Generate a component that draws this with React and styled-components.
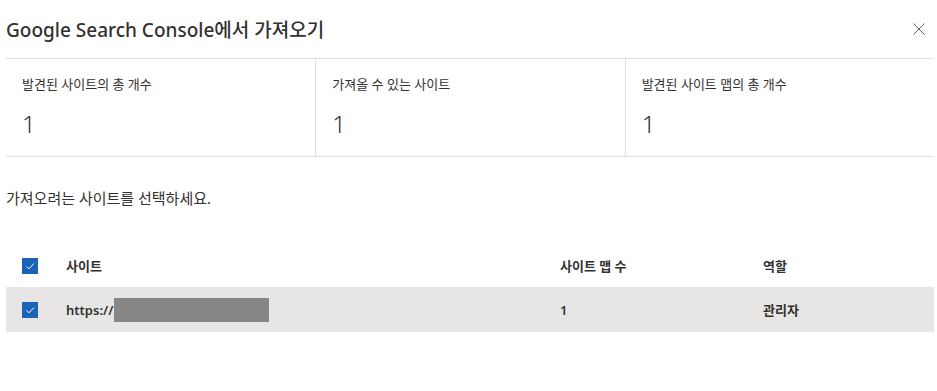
import React from "react";
import styled, { createGlobalStyle } from "styled-components";

const GlobalStyle = createGlobalStyle`
  body {
    margin: 0;
    background: #fff;
    font-family: "Noto Sans", "Noto Sans CJK KR", sans-serif;
    color: #323130;
  }
`;

const Dialog = styled.div`
  width: 928px;
  padding: 0 3px 0 6px;
`;

/* Header */
const Header = styled.div`
  height: 58px;
  display: flex;
  align-items: center;
  justify-content: space-between;
`;

const Title = styled.h1`
  margin: 0;
  font-size: 19px;
  font-weight: 500;
  color: #323130;
`;

const CloseButton = styled.button`
  border: 0;
  background: none;
  padding: 0;
  margin-right: 7px;
  width: 16px;
  height: 16px;
  display: flex;
  align-items: center;
  justify-content: center;
  cursor: pointer;
`;

/* Stats */
const Stats = styled.div`
  display: grid;
  grid-template-columns: repeat(3, 1fr);
  border-top: 1px solid #e1dfdd;
  border-bottom: 1px solid #e1dfdd;
`;

const StatCell = styled.div`
  height: 97px;
  box-sizing: border-box;
  padding: 16px 16px 0;
  border-left: ${(p) => (p.$first ? "none" : "1px solid #e1dfdd")};
`;

const StatLabel = styled.div`
  font-size: 13px;
  line-height: 18px;
  color: #323130;
`;

const StatValue = styled.div`
  margin-top: 15px;
  font-size: 24px;
  font-weight: 300;
  line-height: 32px;
  color: #323130;
`;

const Instruction = styled.p`
  margin: 31px 0 0;
  font-size: 15px;
  line-height: 20px;
  color: #323130;
`;

/* Table */
const Table = styled.div`
  margin-top: 36px;
`;

const Row = styled.div`
  display: grid;
  grid-template-columns: 60px 494px 203px 1fr;
  align-items: center;
  height: ${(p) => (p.$header ? "43px" : "45px")};
  background: ${(p) => (p.$selected ? "#e8e6e4" : "transparent")};
  font-size: 13px;
  font-weight: 600;
  color: #323130;
`;

const CheckCell = styled.div`
  padding-left: 16px;
  display: flex;
  align-items: center;
`;

const Check = styled.span`
  width: 16px;
  height: 16px;
  background: #1a63b8;
  display: flex;
  align-items: center;
  justify-content: center;
`;

const Cell = styled.div`
  display: flex;
  align-items: center;
`;

const Redacted = styled.span`
  display: inline-block;
  width: 155px;
  height: 24px;
  background: #878787;
  margin-left: 1px;
`;

const CheckBox = () => (
  <Check>
    <svg width="12" height="12" viewBox="0 0 12 12">
      <path d="M2.5 6.5 L5 8.8 L9.8 3.6" fill="none" stroke="#fff" strokeWidth="1" />
    </svg>
  </Check>
);

const stats = [
  { label: "발견된 사이트의 총 개수", value: 1 },
  { label: "가져올 수 있는 사이트", value: 1 },
  { label: "발견된 사이트 맵의 총 개수", value: 1 },
];

const App = () => {
  return (
    <Dialog>
      <GlobalStyle />
      <Header>
        <Title>Google Search Console에서 가져오기</Title>
        <CloseButton aria-label="닫기">
          <svg width="12" height="12" viewBox="0 0 12 12">
            <path d="M0.5 0.5 L11.5 11.5 M11.5 0.5 L0.5 11.5" stroke="#605e5c" strokeWidth="1" />
          </svg>
        </CloseButton>
      </Header>

      <Stats>
        {stats.map((s, i) => (
          <StatCell key={s.label} $first={i === 0}>
            <StatLabel>{s.label}</StatLabel>
            <StatValue>{s.value}</StatValue>
          </StatCell>
        ))}
      </Stats>

      <Instruction>가져오려는 사이트를 선택하세요.</Instruction>

      <Table>
        <Row $header>
          <CheckCell>
            <CheckBox />
          </CheckCell>
          <Cell>사이트</Cell>
          <Cell>사이트 맵 수</Cell>
          <Cell>역할</Cell>
        </Row>
        <Row $selected>
          <CheckCell>
            <CheckBox />
          </CheckCell>
          <Cell>
            https://
            <Redacted />
          </Cell>
          <Cell>1</Cell>
          <Cell>관리자</Cell>
        </Row>
      </Table>
    </Dialog>
  );
};

export default App;
